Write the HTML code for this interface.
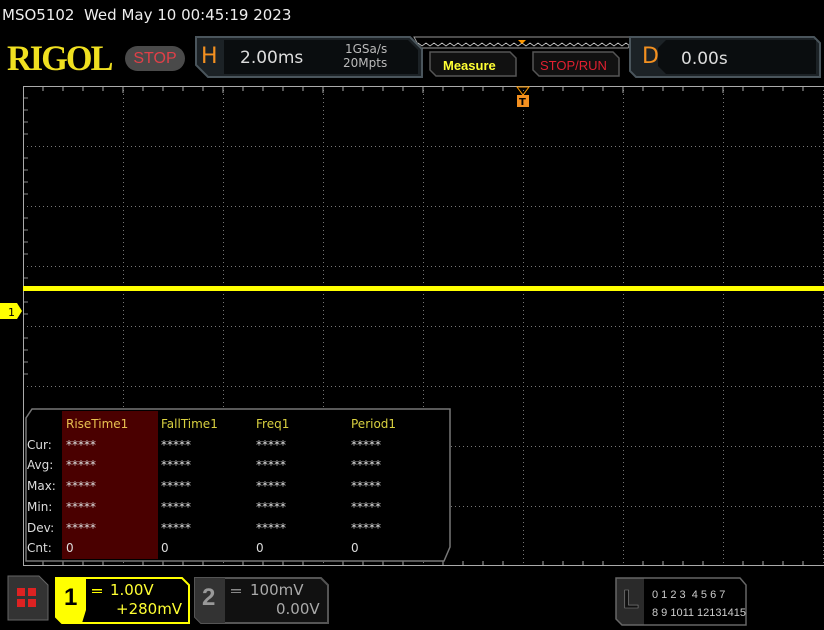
<!DOCTYPE html><html><head><style>
body{margin:0;width:824px;height:630px;background:#000;overflow:hidden;font-family:"DejaVu Sans","Liberation Sans",sans-serif;position:relative}
.a{position:absolute;white-space:nowrap}
</style></head><body>
<svg class="a" style="left:0;top:0" width="824" height="630">
<defs><pattern id="g" width="100" height="60" patternUnits="userSpaceOnUse" x="23" y="86">
<line x1="0.5" y1="0" x2="0.5" y2="60" stroke="#777" stroke-dasharray="1 3"/>
<line x1="0" y1="0.5" x2="100" y2="0.5" stroke="#777" stroke-dasharray="1 3"/>
</pattern></defs>
<rect x="23" y="86" width="801" height="480" fill="url(#g)"/>
<line x1="23" y1="86.5" x2="824" y2="86.5" stroke="#aaa"/>
<line x1="23.5" y1="86" x2="23.5" y2="566" stroke="#aaa"/>
<line x1="23" y1="565.5" x2="824" y2="565.5" stroke="#aaa"/>
<g stroke="#aaa">
<path d="M43 87v4M63 87v4M83 87v4M103 87v4M143 87v4M163 87v4M183 87v4M203 87v4M243 87v4M263 87v4M283 87v4M303 87v4M343 87v4M363 87v4M383 87v4M403 87v4M443 87v4M463 87v4M483 87v4M503 87v4M543 87v4M563 87v4M583 87v4M603 87v4M643 87v4M663 87v4M683 87v4M703 87v4M743 87v4M763 87v4M783 87v4M803 87v4"/>
<path d="M123 87v6M223 87v6M323 87v6M423 87v6M623 87v6M723 87v6"/>
<path d="M43 565v-4M63 565v-4M83 565v-4M103 565v-4M143 565v-4M163 565v-4M183 565v-4M203 565v-4M243 565v-4M263 565v-4M283 565v-4M303 565v-4M343 565v-4M363 565v-4M383 565v-4M403 565v-4M443 565v-4M463 565v-4M483 565v-4M503 565v-4M543 565v-4M563 565v-4M583 565v-4M603 565v-4M643 565v-4M663 565v-4M683 565v-4M703 565v-4M743 565v-4M763 565v-4M783 565v-4M803 565v-4"/>
</g>
<g stroke="#888"><path d="M24 98h4M24 110h4M24 122h4M24 134h4M24 158h4M24 170h4M24 182h4M24 194h4M24 218h4M24 230h4M24 242h4M24 254h4M24 278h4M24 290h4M24 302h4M24 314h4M24 338h4M24 350h4M24 362h4M24 374h4"/></g>
<rect x="23" y="286" width="801" height="5" fill="#ffff00"/>
<path d="M0 303h17l5 8l-5 8h-17z" fill="#ffff00"/>
<text x="8" y="316" font-size="11" fill="#000">1</text>
<path d="M517 87h12l-6 8z" fill="none" stroke="#f90"/>
<rect x="517" y="95" width="12" height="12" fill="#f39020"/>
<text x="519" y="105" font-size="10" font-weight="bold" fill="#000">T</text>
<path d="M414 37h220l-6 11h-208z" fill="none" stroke="#999"/>
<path d="M418 43 l4 3 4-3 4 3 4-3 4 3 4-3 4 3 4-3 4 3 4-3 4 3 4-3 4 3 4-3 4 3 4-3 4 3 4-3 4 3 4-3 4 3 4-3 4 3 4-3 4 3 4-3 4 3 4-3 4 3 4-3 4 3 4-3 4 3 4-3 4 3 4-3 4 3 4-3 4 3 4-3 4 3 4-3 4 3 4-3 4 3 4-3 4 3 4-3 4 3 4-3 4 3 4-3 4 3 4-3 4 3" fill="none" stroke="#ccc" stroke-width="0.8"/>
<path d="M518 40h8l-4 4z" fill="#f90"/>
<path d="M196 37h214l12 12v28h-214l-12-12z" fill="#1c2226" stroke="#4a555c" stroke-width="2"/>
<path d="M224 40h184l10 10v24h-194z" fill="#0a0d0f"/>
<path d="M430 52h80l6 6v18h-80l-6-6z" fill="#111" stroke="#555" stroke-width="1.5"/>
<path d="M533 52h80l6 6v18h-80l-6-6z" fill="#111" stroke="#555" stroke-width="1.5"/>
<path d="M630 37h184l6 6v34h-184l-6-6z" fill="#1c2226" stroke="#4a555c" stroke-width="2"/>
<path d="M666 40h150v34h-150l-8-8v-18z" fill="#0a0d0f"/>
<path d="M32 409h418v138l-6 14h-418v-143z" fill="#000" stroke="#777" stroke-width="1.5"/>
<rect x="62" y="411" width="96" height="148" fill="#4a0000"/>
<path d="M8 576h31l9 9v35h-40z" fill="#333" stroke="#666"/>
<rect x="17" y="588" width="8" height="8" fill="#d22"/><rect x="28" y="588" width="8" height="8" fill="#d22"/>
<rect x="17" y="599" width="8" height="8" fill="#d22"/><rect x="28" y="599" width="8" height="8" fill="#d22"/>
<path d="M56 578h126l7 7v38h-127l-6-6z" fill="#000" stroke="#ffff00" stroke-width="2"/>
<path d="M56 578h30v32l-4 13h-20l-6-6z" fill="#ffff00"/>
<path d="M195 578h126l7 7v38h-127l-6-6z" fill="#111" stroke="#555" stroke-width="2"/>
<path d="M195 578h30v45h-24l-6-6z" fill="#333"/>
<path d="M616 578h28v47h-22l-6-6z" fill="#2a2a2a"/>
<path d="M616 578h124l6 7v40h-124l-6-6z" fill="none" stroke="#666" stroke-width="1.5"/>
<rect x="92" y="589" width="10" height="1.5" fill="#ffff00"/><rect x="92" y="592" width="10" height="1" fill="#ffff00"/>
<rect x="231" y="589" width="10" height="1.5" fill="#888"/><rect x="231" y="592" width="10" height="1" fill="#888"/>
</svg>
<div class="a" style="left:2px;top:6px;font-size:15px;color:#eee">MSO5102&nbsp; Wed May 10 00:45:19 2023</div>
<div class="a" style="left:7px;top:37px;font-family:'Liberation Serif',serif;font-weight:bold;font-size:36px;color:#f0e020;letter-spacing:-2px;transform:scaleX(0.95);transform-origin:left">RIGOL</div>
<div class="a" style="left:125px;top:46px;width:60px;height:25px;border-radius:13px;background:#4a4a4a;color:#e04048;font-size:16px;line-height:25px;text-align:center;font-family:'Liberation Sans'">STOP</div>
<div class="a" style="left:201px;top:44px;font-size:22px;color:#f39020">H</div>
<div class="a" style="left:240px;top:48px;font-size:17px;color:#ddd">2.00ms</div>
<div class="a" style="left:343px;top:42px;font-size:12px;color:#bbb;line-height:14px;text-align:right">1GSa/s<br>20Mpts</div>
<div class="a" style="left:443px;top:58px;font-size:13px;font-weight:bold;color:#ffff33;font-family:'Liberation Sans'">Measure</div>
<div class="a" style="left:540px;top:58px;font-size:13px;color:#e02030;font-family:'Liberation Sans'">STOP/RUN</div>
<div class="a" style="left:642px;top:44px;font-size:22px;color:#f39020">D</div>
<div class="a" style="left:681px;top:49px;font-size:17px;color:#ddd">0.00s</div>
<div class="a" style="left:27px;top:414px;font-size:12px;color:#ddd;line-height:20.7px">&nbsp;<br>Cur:<br>Avg:<br>Max:<br>Min:<br>Dev:<br>Cnt:</div>
<div class="a" style="left:66px;top:414px;font-size:12px;color:#ddd;line-height:20.7px"><span style="color:#e8c050">RiseTime1</span><br>*****<br>*****<br>*****<br>*****<br>*****<br>0</div>
<div class="a" style="left:161px;top:414px;font-size:12px;color:#ddd;line-height:20.7px"><span style="color:#d8d040">FallTime1</span><br>*****<br>*****<br>*****<br>*****<br>*****<br>0</div>
<div class="a" style="left:256px;top:414px;font-size:12px;color:#ddd;line-height:20.7px"><span style="color:#d8d040">Freq1</span><br>*****<br>*****<br>*****<br>*****<br>*****<br>0</div>
<div class="a" style="left:351px;top:414px;font-size:12px;color:#ddd;line-height:20.7px"><span style="color:#d8d040">Period1</span><br>*****<br>*****<br>*****<br>*****<br>*****<br>0</div>
<div class="a" style="left:64px;top:584px;font-size:24px;font-weight:bold;color:#000;font-family:'Liberation Sans'">1</div>
<div class="a" style="left:110px;top:581px;font-size:15px;color:#ffff33">1.00V</div>
<div class="a" style="left:116px;top:600px;font-size:15px;color:#ffff33">+280mV</div>
<div class="a" style="left:202px;top:584px;font-size:24px;font-weight:bold;color:#999;font-family:'Liberation Sans'">2</div>
<div class="a" style="left:250px;top:581px;font-size:15px;color:#aaa">100mV</div>
<div class="a" style="left:276px;top:600px;font-size:15px;color:#aaa">0.00V</div>
<div class="a" style="left:623px;top:584px;font-size:26px;color:#111;font-weight:bold;font-family:'Liberation Sans';-webkit-text-stroke:0.6px #888">L</div>
<div class="a" style="left:652px;top:586px;font-size:11px;color:#ccc;line-height:18px;font-family:'Liberation Sans'">0 1 2 3&nbsp; 4 5 6 7<br>8 9 1011 12131415</div>
</body></html>
